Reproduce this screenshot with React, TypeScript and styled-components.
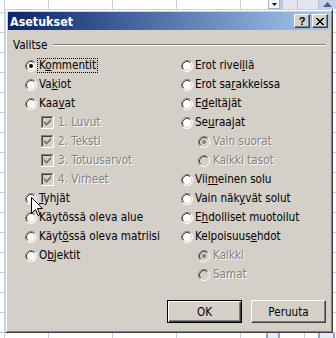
import React from "react";
import styled, { createGlobalStyle } from "styled-components";

const FACE = "#d4d0c8";
const SHADOW = "#808080";
const DARK = "#404040";
const GRID = "#c9cfe3";

const GlobalStyle = createGlobalStyle`
  html, body {
    margin: 0;
    padding: 0;
    background: #fff;
  }
  body {
    font-family: "DejaVu Sans Condensed", "Liberation Sans", sans-serif;
    font-size: 11.6px;
    color: #000;
  }
`;

// spreadsheet peeking out behind the dialog
const Sheet = styled.div`
  position: relative;
  width: 336px;
  height: 338px;
  overflow: hidden;
  display: flex;
  flex-direction: column;
  background-color: #fff;
  background-image:
    linear-gradient(to right, ${GRID} 1px, transparent 1px),
    linear-gradient(to right, ${GRID} 1px, transparent 1px),
    linear-gradient(to bottom, ${GRID} 1px, transparent 1px);
  background-size: 64px 100%, 1px 100%, 100% 20px;
  background-position: 48px 0, 4px 0, 0 12px;
  background-repeat: repeat-x, no-repeat, repeat-y;
`;

const TopStrip = styled.div`
  height: 9px;
  display: flex;
  justify-content: flex-end;
`;

const DropButton = styled.div`
  width: 12px;
  box-sizing: border-box;
  border: 1px solid #9db1d6;
  border-top: none;
  background: #f4f6fb;
  display: flex;
  align-items: center;
  justify-content: center;
`;

const StripGap = styled.div`
  width: 3px;
  background: #b7c6e2;
`;

const HeaderCells = styled.div`
  width: 36px;
  box-sizing: border-box;
  background: #e2e5ee;
  border-right: 1px solid #b6c0d6;
  display: grid;
  grid-template-columns: 15px 1fr;
  & > span:first-child {
    border-right: 1px solid #b6c0d6;
  }
`;

const ScrollUp = styled.div`
  width: 17px;
  background: #c4d2ec;
  display: flex;
  align-items: center;
  justify-content: center;
`;

const Filler = styled.div`
  flex: 1;
`;

const BottomStrip = styled.div`
  height: 5px;
  display: flex;
  justify-content: flex-end;
`;

const BottomBar = styled.div<{ $w: number; $mr: number }>`
  width: ${(p) => p.$w}px;
  margin-right: ${(p) => p.$mr}px;
  box-sizing: border-box;
  border-left: 2px solid #8fa6cc;
  border-right: 2px solid #8fa6cc;
  background: #e6ecf6;
`;

const Dialog = styled.div`
  position: absolute;
  left: 5px;
  top: 9px;
  width: 328px;
  height: 324px;
  box-sizing: border-box;
  background: ${FACE};
  border: 1px solid;
  border-color: ${FACE} ${DARK} ${DARK} ${FACE};
  box-shadow: inset 1px 1px #fff, inset -1px -1px ${SHADOW};
  padding: 2px;
  display: flex;
  flex-direction: column;
`;

const TitleBar = styled.div`
  height: 18px;
  margin-bottom: 1px;
  padding-left: 2px;
  display: flex;
  align-items: center;
  background: linear-gradient(to right, #0a246a, #a6caf0);
  color: #fff;
  font-weight: bold;
  font-size: 12.4px;
`;

const Title = styled.span`
  flex: 1;
`;

const CaptionButton = styled.div`
  width: 16px;
  height: 14px;
  box-sizing: border-box;
  margin-right: 2px;
  background: ${FACE};
  border: 1px solid;
  border-color: #fff ${DARK} ${DARK} #fff;
  box-shadow: inset -1px -1px ${SHADOW};
  display: flex;
  align-items: center;
  justify-content: center;
  color: #000;
  font-family: "Liberation Sans", sans-serif;
  font-size: 11px;
  font-weight: bold;
  line-height: 1;
`;

const Body = styled.div`
  flex: 1;
  display: flex;
  flex-direction: column;
`;

const GroupHeader = styled.div`
  margin-top: 7px;
  height: 14px;
  padding: 0 4px 0 5px;
  display: flex;
  align-items: center;
`;

const GroupLine = styled.div`
  flex: 1;
  margin-left: 6px;
  border-top: 1px solid ${SHADOW};
  border-bottom: 1px solid #fff;
`;

const Columns = styled.div`
  margin-top: 4px;
  padding-left: 17px;
  display: grid;
  grid-template-columns: 156px 1fr;
`;

const Column = styled.div`
  display: flex;
  flex-direction: column;
`;

const Row = styled.div<{ $indent: number }>`
  height: 19px;
  padding-left: ${(p) => p.$indent}px;
  display: flex;
  align-items: center;
`;

const Label = styled.span<{ $disabled?: boolean; $focused?: boolean; $gap: number }>`
  margin-left: ${(p) => p.$gap}px;
  padding: 0 1px;
  line-height: 13px;
  border: 1px dotted ${(p) => (p.$focused ? "#000" : "transparent")};
  color: ${(p) => (p.$disabled ? SHADOW : "#000")};
  text-shadow: ${(p) => (p.$disabled ? "1px 1px #fff" : "none")};
  white-space: nowrap;
`;

const Buttons = styled.div`
  margin-top: 16px;
  padding-right: 4px;
  display: flex;
  justify-content: flex-end;
  gap: 9px;
`;

const PushButton = styled.div<{ $default?: boolean }>`
  width: 75px;
  height: 23px;
  box-sizing: border-box;
  background: ${FACE};
  display: flex;
  align-items: center;
  justify-content: center;
  border: 1px solid;
  border-color: ${(p) => (p.$default ? "#000" : `#fff ${DARK} ${DARK} #fff`)};
  box-shadow: ${(p) =>
    p.$default
      ? `inset 1px 1px #fff, inset -1px -1px ${DARK}, inset -2px -2px ${SHADOW}`
      : `inset -1px -1px ${SHADOW}`};
`;

const Cursor = styled.svg`
  position: absolute;
  left: 31px;
  top: 197px;
`;

const pixels = (rows: string[], color: string, dx = 0, dy = 0) =>
  rows.flatMap((r, y) =>
    r.split("").map((c, x) =>
      c === "#" ? (
        <rect key={`${x}-${y}`} x={x + dx} y={y + dy} width={1} height={1} fill={color} />
      ) : null
    )
  );

const CHECK = [
  "......#",
  ".....##",
  "#...###",
  "##.###.",
  "#####..",
  ".###...",
  "..#....",
];

const CROSS = [
  "##....##",
  ".##..##.",
  "..####..",
  "...##...",
  "..####..",
  ".##..##.",
  "##....##",
];

const Radio = ({ checked, disabled }: { checked?: boolean; disabled?: boolean }) => (
  <svg width="12" height="12" viewBox="0 0 12 12">
    <circle cx="6" cy="6" r="5.5" fill={disabled ? FACE : "#fff"} />
    <path d="M2.11 9.89 A5.5 5.5 0 0 1 9.89 2.11" stroke={SHADOW} fill="none" />
    <path d="M9.89 2.11 A5.5 5.5 0 0 1 2.11 9.89" stroke="#fff" fill="none" />
    <path d="M2.82 9.18 A4.5 4.5 0 0 1 9.18 2.82" stroke={DARK} fill="none" />
    <path d="M9.18 2.82 A4.5 4.5 0 0 1 2.82 9.18" stroke={FACE} fill="none" />
    {checked && <circle cx="6" cy="6" r="2" fill={disabled ? SHADOW : "#000"} />}
  </svg>
);

const Checkbox = ({ disabled }: { disabled?: boolean }) => (
  <svg width="13" height="13" viewBox="0 0 13 13" shapeRendering="crispEdges">
    <rect x="0" y="0" width="13" height="13" fill="#fff" />
    <rect x="0" y="0" width="12" height="12" fill={SHADOW} />
    <rect x="1" y="1" width="11" height="11" fill={FACE} />
    <rect x="1" y="1" width="10" height="10" fill={DARK} />
    <rect x="2" y="2" width="9" height="9" fill={disabled ? FACE : "#fff"} />
    {pixels(CHECK, disabled ? SHADOW : "#000", 3, 3)}
  </svg>
);

// "&" marks the underlined access key, as in a Windows resource string
const Mnemonic = ({ text }: { text: string }) => {
  const i = text.indexOf("&");
  if (i < 0) return <>{text}</>;
  return (
    <>
      {text.slice(0, i)}
      <u>{text[i + 1]}</u>
      {text.slice(i + 2)}
    </>
  );
};

type Option = {
  text: string;
  kind?: "check";
  indent?: boolean;
  checked?: boolean;
  disabled?: boolean;
  focused?: boolean;
};

const left: Option[] = [
  { text: "K&ommentit", checked: true, focused: true },
  { text: "Va&kiot" },
  { text: "Kaa&vat" },
  { text: "1. Luvut", kind: "check", indent: true, disabled: true },
  { text: "2. Teksti", kind: "check", indent: true, disabled: true },
  { text: "3. Totuusarvot", kind: "check", indent: true, disabled: true },
  { text: "4. Virheet", kind: "check", indent: true, disabled: true },
  { text: "&Tyhjät" },
  { text: "Käytössä oleva alue" },
  { text: "Käyt&össä oleva matriisi" },
  { text: "O&bjektit" },
];

const right: Option[] = [
  { text: "Erot rivei&llä" },
  { text: "Erot sa&rakkeissa" },
  { text: "E&deltäjät" },
  { text: "Se&uraajat" },
  { text: "Vain suorat", indent: true, checked: true, disabled: true },
  { text: "Kaikki tasot", indent: true, disabled: true },
  { text: "Vii&meinen solu" },
  { text: "Vain näk&yvät solut" },
  { text: "E&hdolliset muotoilut" },
  { text: "Kelpoisuus&ehdot" },
  { text: "Kaikki", indent: true, checked: true, disabled: true },
  { text: "Samat", indent: true, disabled: true },
];

const OptionRow = ({ o }: { o: Option }) => (
  <Row $indent={o.indent ? (o.kind === "check" ? 16 : 17) : 0}>
    {o.kind === "check" ? (
      <Checkbox disabled={o.disabled} />
    ) : (
      <Radio checked={o.checked} disabled={o.disabled} />
    )}
    <Label $disabled={o.disabled} $focused={o.focused} $gap={o.kind === "check" ? 2 : o.indent ? 1 : 0}>
      <Mnemonic text={o.text} />
    </Label>
  </Row>
);

export default function App() {
  return (
    <>
      <GlobalStyle />
      <Sheet>
        <TopStrip>
          <DropButton>
            <svg width="5" height="3" viewBox="0 0 5 3">
              <path d="M0 0h5L2.5 3z" fill="#000" />
            </svg>
          </DropButton>
          <StripGap />
          <HeaderCells>
            <span />
            <span />
          </HeaderCells>
          <ScrollUp>
            <svg width="9" height="5" viewBox="0 0 9 5">
              <path d="M4.5 0L9 5H0z" fill="#4a5f8a" />
            </svg>
          </ScrollUp>
        </TopStrip>
        <Filler />
        <BottomStrip>
          <BottomBar $w={14} $mr={38} />
          <BottomBar $w={17} $mr={1} />
        </BottomStrip>

        <Dialog>
          <TitleBar>
            <Title>Asetukset</Title>
            <CaptionButton>?</CaptionButton>
            <CaptionButton>
              <svg width="8" height="7" viewBox="0 0 8 7" shapeRendering="crispEdges">
                {pixels(CROSS, "#000")}
              </svg>
            </CaptionButton>
          </TitleBar>
          <Body>
            <GroupHeader>
              <span>Valitse</span>
              <GroupLine />
            </GroupHeader>
            <Columns>
              <Column>
                {left.map((o) => (
                  <OptionRow key={o.text} o={o} />
                ))}
              </Column>
              <Column>
                {right.map((o) => (
                  <OptionRow key={o.text} o={o} />
                ))}
              </Column>
            </Columns>
            <Buttons>
              <PushButton $default>OK</PushButton>
              <PushButton>Peruuta</PushButton>
            </Buttons>
          </Body>
        </Dialog>

        <Cursor width="12" height="20" viewBox="0 0 12 20">
          <path
            d="M0.5 0.5V16.5L4.5 12.5L7 18.5L9 17.5L6.5 11.5H11.5Z"
            fill="#fff"
            stroke="#000"
            strokeLinejoin="miter"
          />
        </Cursor>
      </Sheet>
    </>
  );
}
